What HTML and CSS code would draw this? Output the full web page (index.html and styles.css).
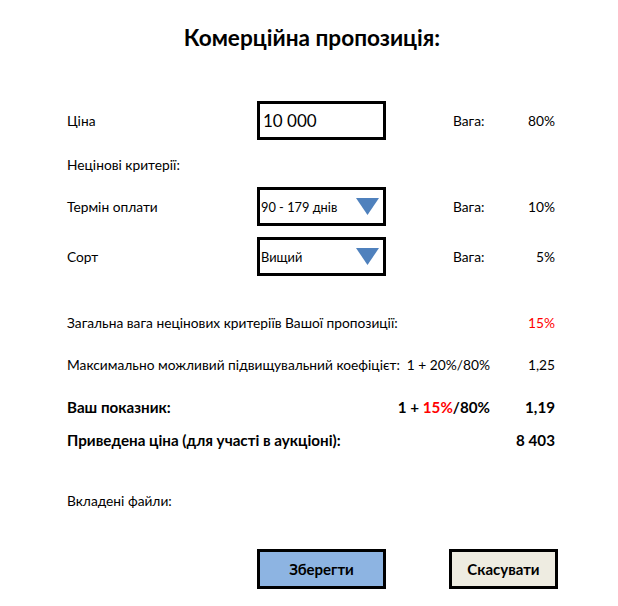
FILE: index.html
```html
<!DOCTYPE html>
<html lang="uk">
<head>
<meta charset="utf-8">
<title>Комерційна пропозиція</title>
<link rel="stylesheet" href="styles.css">
</head>
<body>
<div class="page">
  <h1 class="title">Комерційна пропозиція:</h1>

  <div class="row row-price">
    <div class="label">Ціна</div>
    <div class="box box-input">10 000</div>
    <div class="w-label">Вага:</div>
    <div class="w-val">80%</div>
  </div>

  <div class="row row-sub">
    <div class="label">Нецінові критерії:</div>
  </div>

  <div class="row row-term">
    <div class="label">Термін оплати</div>
    <div class="box box-select"><span>90 - 179 днів</span><svg class="arrow" width="23" height="17" viewBox="0 0 23 17"><polygon points="0,0 23,0 11.5,17" fill="#4f81bd"/></svg></div>
    <div class="w-label">Вага:</div>
    <div class="w-val">10%</div>
  </div>

  <div class="row row-sort">
    <div class="label">Сорт</div>
    <div class="box box-select"><span>Вищий</span><svg class="arrow" width="23" height="17" viewBox="0 0 23 17"><polygon points="0,0 23,0 11.5,17" fill="#4f81bd"/></svg></div>
    <div class="w-label">Вага:</div>
    <div class="w-val">5%</div>
  </div>

  <div class="row line row-total">
    <div class="grow">Загальна вага нецінових критеріїв Вашої пропозиції:</div>
    <div class="val red">15%</div>
  </div>

  <div class="row line row-max">
    <div class="grow">Максимально можливий підвищувальний коефіцієт:</div>
    <div class="formula">1 + 20%/80%</div>
    <div class="val">1,25</div>
  </div>

  <div class="row line bold row-yours">
    <div class="grow">Ваш показник:</div>
    <div class="formula">1 + <span class="red">15%</span>/80%</div>
    <div class="val">1,19</div>
  </div>

  <div class="row line bold row-reduced">
    <div class="grow">Приведена ціна (для участі в аукціоні):</div>
    <div class="val">8 403</div>
  </div>

  <div class="row line row-files">
    <div class="grow">Вкладені файли:</div>
  </div>

  <div class="buttons">
    <button class="btn btn-save">Зберегти</button>
    <button class="btn btn-cancel">Скасувати</button>
  </div>
</div>
</body>
</html>
```
FILE: styles.css
```css
* { box-sizing: border-box; }
html, body { margin: 0; padding: 0; background: #fff; }
body {
  font-family: Lato, "Open Sans", "Noto Sans", sans-serif;
  font-size: 13.75px;
  color: #000;
}
.page {
  width: 618px;
  height: 606px;
  padding-top: 23px;
  display: flex;
  flex-direction: column;
}
.title {
  margin: 0;
  font-size: 22.6px;
  font-weight: bold;
  line-height: 30px;
  text-align: center;
  padding-left: 6px;
}
.row {
  display: flex;
  align-items: center;
  padding-left: 67px;
  width: 555px;
  white-space: nowrap;
}
.label { width: 190px; }
.box {
  width: 129px;
  height: 39px;
  border: 3px solid #000;
  display: flex;
  align-items: center;
}
.box-input {
  font-size: 17px;
  padding-left: 3px;
}
.box-select {
  font-size: 12.8px;
  padding-left: 1px;
  padding-right: 4px;
  justify-content: space-between;
}
.arrow { display: block; }
.w-label { margin-left: 67px; width: 50px; }
.w-val { width: 52px; text-align: right; }

.line { height: 20px; }
.grow { flex: 1; }
.formula { text-align: right; }
.val { width: 65px; text-align: right; }
.red { color: #ff0000; }
.bold { font-weight: bold; font-size: 15.2px; }

.row-price { margin-top: 48px; }
.row-sub { margin-top: 14px; height: 20px; }
.row-term { margin-top: 13px; }
.row-sort { margin-top: 11px; }
.row-total { margin-top: 36px; }
.row-max { margin-top: 22px; }
.row-yours { margin-top: 23px; }
.row-reduced { margin-top: 13px; }
.row-files { margin-top: 40px; }

.buttons {
  margin-top: 39px;
  padding-left: 257px;
  display: flex;
  gap: 63px;
}
.btn {
  height: 40px;
  border: 3px solid #000;
  font-family: inherit;
  font-size: 15px;
  font-weight: bold;
  color: #000;
  padding: 0;
}
.btn-save { width: 129px; background: #8db4e2; }
.btn-cancel { width: 109px; background: #eeece1; }
```
